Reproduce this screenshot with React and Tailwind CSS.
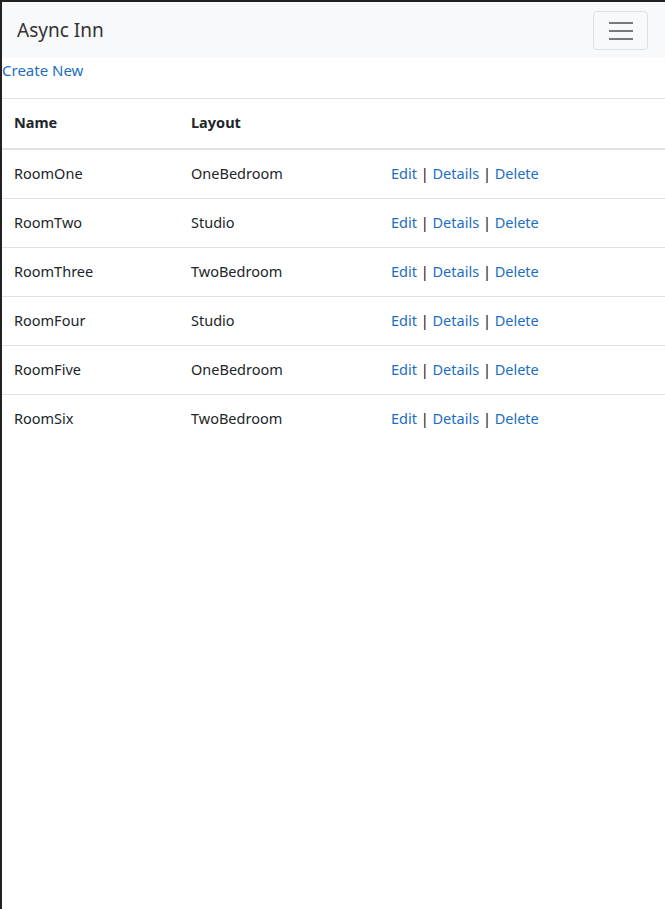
import React from "react";

const rows = [
  ["RoomOne", "OneBedroom"],
  ["RoomTwo", "Studio"],
  ["RoomThree", "TwoBedroom"],
  ["RoomFour", "Studio"],
  ["RoomFive", "OneBedroom"],
  ["RoomSix", "TwoBedroom"],
];

export default function App() {
  return (
    <div
      className="min-h-[909px] w-[665px] bg-white border-t-2 border-l-2 border-[#222] text-[#212529] text-[16px] leading-[24px]"
      style={{ fontFamily: '"Segoe UI", "Noto Sans", "Open Sans", sans-serif' }}
    >
      <nav className="h-[56px] bg-[#f8f9fa] flex items-center justify-between pl-[15px] pr-[17px]">
        <span className="text-[19px] leading-[30px] text-[#333]">Async Inn</span>
        <button className="w-[55px] h-[39px] border border-[rgba(0,0,0,0.1)] rounded-[4px] flex flex-col items-center justify-center gap-[6px] mt-[1px]">
          <span className="block w-[24px] h-[2px] bg-[#7a7a7a]"></span>
          <span className="block w-[24px] h-[2px] bg-[#7a7a7a]"></span>
          <span className="block w-[24px] h-[2px] bg-[#7a7a7a]"></span>
        </button>
      </nav>
      <p className="mb-[16px]">
        <a className="text-[#1b6ec2] text-[15px]">Create New</a>
      </p>
      <table className="w-full border-collapse text-[14.5px]">
        <thead>
          <tr className="border-t border-[#dee2e6] border-b-2">
            <th className="text-left font-bold w-[177px] px-[12px] pt-[11px] pb-[14px] h-[49px]">Name</th>
            <th className="text-left font-bold w-[200px] px-[12px] pt-[11px] pb-[14px]">Layout</th>
            <th className="px-[12px]"></th>
          </tr>
        </thead>
        <tbody>
          {rows.map(([n, l], i) => (
            <tr key={n} className={i === 0 ? "" : "border-t border-[#dee2e6]"}>
              <td className="px-[12px] pb-[2px] h-[49px]">{n}</td>
              <td className="px-[12px] pb-[2px]">{l}</td>
              <td className="px-[12px] pb-[2px]">
                <a className="text-[#1b6ec2]">Edit</a> <span className="text-[#111]">|</span>{" "}
                <a className="text-[#1b6ec2]">Details</a> <span className="text-[#111]">|</span>{" "}
                <a className="text-[#1b6ec2]">Delete</a>
              </td>
            </tr>
          ))}
        </tbody>
      </table>
    </div>
  );
}
